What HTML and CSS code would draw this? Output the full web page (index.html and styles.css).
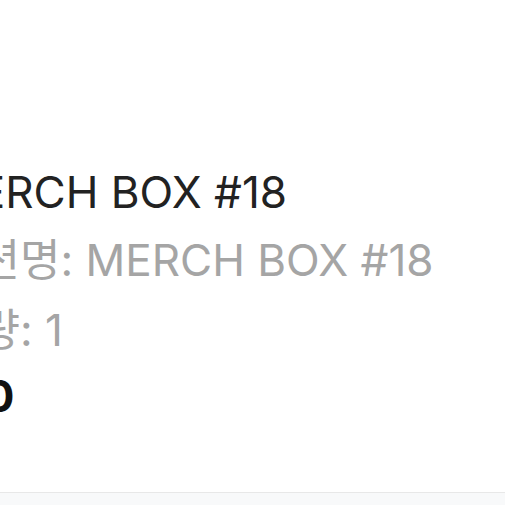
FILE: index.html
```html
<!DOCTYPE html>
<html lang="ko">
<head>
<meta charset="UTF-8">
<meta name="viewport" content="width=device-width, initial-scale=1.0">
<link rel="stylesheet" href="styles.css">
<title>주문 상세</title>
</head>
<body>

<div class="order">
    <div class="order-info">
        <div class="product-name">MERCH BOX #18</div>
        <div class="product-option">옵션명: MERCH BOX #18</div>
        <div class="product-qty">수량: 1</div>
        <div class="product-price">₩0</div>
    </div>
</div>

<div class="bottom-bar"></div>

</body>
</html>
```

FILE: styles.css
```css
body {
    margin: 0;
    background-color: #FFFFFF;
    font-family: Inter, "Noto Sans CJK KR", sans-serif;
    overflow: hidden;
}

.order {
    height: 493px;
    border-bottom: 1px solid #E8E8E8;
    box-sizing: border-box;
    padding-top: 158px;
}

.order-info {
    margin-left: -61px;
    font-size: 44px;
    line-height: 68px;
    white-space: nowrap;
}

.product-name {
    color: #222222;
}

.product-option,
.product-qty {
    color: #A5A5A5;
}

.product-qty {
    margin-top: 2px;
}

.product-price {
    color: #111111;
    font-weight: 700;
    margin-top: -2px;
}

.bottom-bar {
    height: 12px;
    background-color: #F8F9FA;
}
```
